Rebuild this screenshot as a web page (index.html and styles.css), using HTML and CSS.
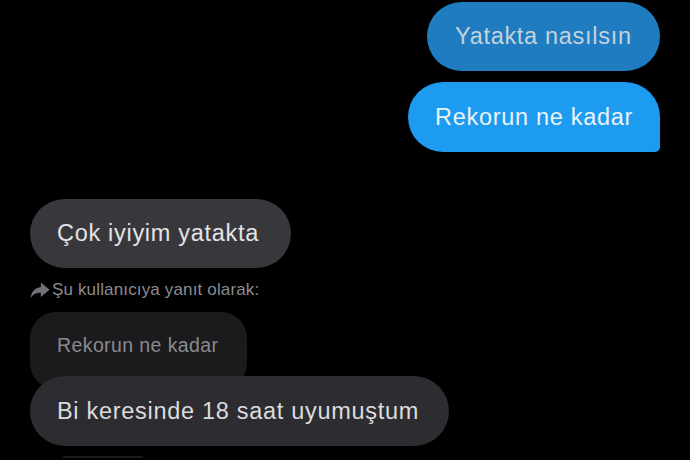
FILE: index.html
```html
<!DOCTYPE html>
<html lang="tr">
<head>
<meta charset="utf-8">
<link rel="stylesheet" href="styles.css">
</head>
<body>
<div class="chat">
  <div class="row right first">
    <div class="bubble sent dim">Yatakta nasılsın</div>
  </div>
  <div class="row right second">
    <div class="bubble sent last-sent">Rekorun ne kadar</div>
  </div>
  <div class="row left third">
    <div class="bubble recv">Çok iyiyim yatakta</div>
  </div>
  <div class="reply-label">
    <svg class="reply-icon" viewBox="0 0 24 24" width="20" height="20" aria-hidden="true">
      <path d="M13 3 L23.5 11.8 L13 20.5 V15.2 C7.5 15 3.5 17 0.8 21.5 C1.5 14.2 5.8 9.2 13 8.3 Z" fill="#717176"/>
    </svg>
    <span>Şu kullanıcıya yanıt olarak:</span>
  </div>
  <div class="row left quote-row">
    <div class="quote">Rekorun ne kadar</div>
  </div>
  <div class="row left reply-row">
    <div class="bubble recv2">Bi keresinde 18 saat uyumuştum</div>
  </div>
  <div class="peek"></div>
</div>
</body>
</html>
```

FILE: styles.css
```css
html, body {
  margin: 0;
  padding: 0;
  background: #000;
}
body {
  width: 690px;
  height: 460px;
  overflow: hidden;
  font-family: "Liberation Sans", Arial, sans-serif;
}
.chat {
  display: flex;
  flex-direction: column;
}
.row {
  display: flex;
}
.right {
  justify-content: flex-end;
  padding-right: 30px;
}
.left {
  justify-content: flex-start;
  padding-left: 30px;
}
.first { margin-top: 2px; }
.second { margin-top: 11px; }
.third { margin-top: 47px; }
.bubble {
  box-sizing: border-box;
  height: 69px;
  display: flex;
  align-items: center;
  border-radius: 35px;
  font-size: 23.5px;
  letter-spacing: 0.7px;
  white-space: nowrap;
}
.sent.dim {
  width: 233px;
  padding-left: 28px;
  background: #1f7cc1;
  color: #c3d3dc;
}
.sent.last-sent {
  width: 252px;
  height: 70px;
  padding-left: 27px;
  background: #1d9bf0;
  color: #eaf3f8;
  border-bottom-right-radius: 5px;
}
.recv {
  width: 261px;
  padding-left: 27px;
  background: #38383c;
  color: #e3e3e5;
}
.reply-label {
  display: flex;
  align-items: center;
  gap: 2px;
  margin-top: 12px;
  padding-left: 30px;
  height: 20px;
  font-size: 17px;
  letter-spacing: 0.15px;
  color: #8b8b90;
}
.reply-icon {
  flex: none;
}
.quote {
  box-sizing: border-box;
  width: 217px;
  height: 77px;
  margin-top: 12px;
  padding: 22px 0 0 27px;
  border-radius: 26px;
  background: #1b1b1e;
  color: #8a8a8f;
  font-size: 19.5px;
  letter-spacing: 0.4px;
  white-space: nowrap;
}
.reply-row {
  margin-top: -13px;
}
.recv2 {
  width: 419px;
  height: 70px;
  padding-left: 27px;
  background: #2d2d31;
  color: #dcdcde;
}
.peek {
  width: 80px;
  height: 2px;
  margin: 10px 0 0 63px;
  background: #1a1a1c;
}
```
